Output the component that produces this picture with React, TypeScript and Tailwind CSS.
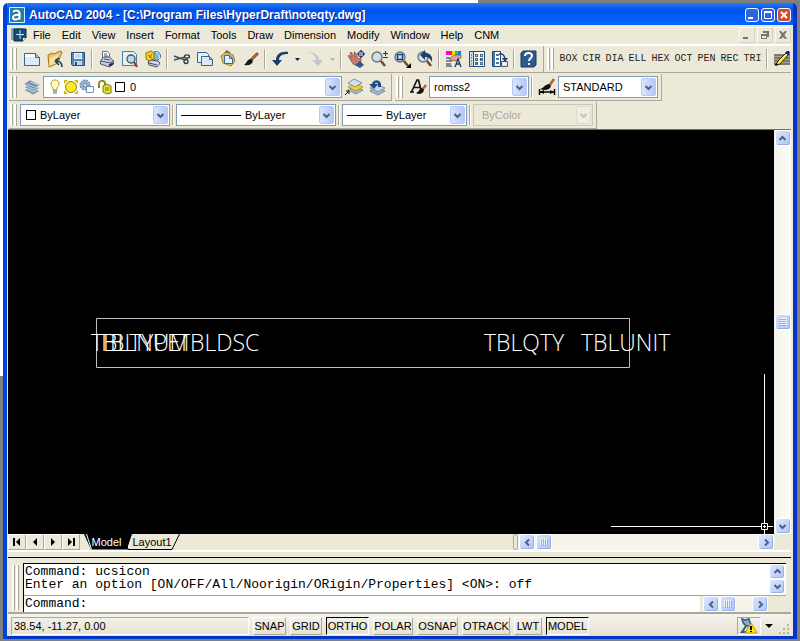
import React, { useState } from 'react';

const MENUS = ['File', 'Edit', 'View', 'Insert', 'Format', 'Tools', 'Draw', 'Dimension', 'Modify', 'Window', 'Help', 'CNM'];
const SHAPES = ['BOX', 'CIR', 'DIA', 'ELL', 'HEX', 'OCT', 'PEN', 'REC', 'TRI'];

/* ---------- Icons ---------- */

const Icon: React.FC<{ children: React.ReactNode }> = ({ children }) => (
    <svg viewBox="0 0 18 18" className="h-[18px] w-[18px] shrink-0" fill="none" aria-hidden="true">
        {children}
    </svg>
);

const NewIcon = () => (
    <Icon>
        <path d="M1.500 3.500h11l4 4v8h-15z" fill="#dcebf5" stroke="#35678f" />
        <path d="M2 4h10v3H2z" fill="#fff" />
        <path d="M12.500 3.500v4h4" fill="#a8c8dc" stroke="#35678f" />
    </Icon>
);

const OpenIcon = () => (
    <Icon>
        <path d="M2 5l4-2 2 1 6-3 2 1-4 11-9 4z" fill="#e9c46a" stroke="#a07a20" />
        <path d="M4 8l9-4-3 9-7 3z" fill="#f7df9a" />
        <path d="M16 17c0-4-2-6-6-6M9 11l4-3M9 11l4 4" stroke="#1d3f66" strokeWidth="1.600" />
    </Icon>
);

const SaveIcon = () => (
    <Icon>
        <path d="M2.500 2.500h13v13h-12l-1-1z" fill="#4d87b5" stroke="#24517c" />
        <path d="M5 3h8v6H5z" fill="#f2f6fa" />
        <path d="M6 5h6M6 7h6" stroke="#9ab3c6" />
        <path d="M5 11h8v4H5z" fill="#c4d9e8" />
        <path d="M6 12h2v3H6z" fill="#24517c" />
    </Icon>
);

const PrintIcon = () => (
    <Icon>
        <path d="M4.500 8V1.500h5l2 2v5" fill="#fff" stroke="#5a6c90" />
        <path d="M2.500 11l3-4h6l4 4v3l-4 3-9-3z" fill="#c9cfdd" stroke="#4a5575" />
        <path d="M3 11l9 2 3-2M6 9l6 1M6 4h3M6 6h4" stroke="#4a5575" />
        <path d="M11 15.500l4-2" stroke="#222c48" strokeWidth="2" />
    </Icon>
);

const PreviewIcon = () => (
    <Icon>
        <path d="M1.500 1.500h11l3 3v11h-14z" fill="#e6f1f7" stroke="#4b7ea4" />
        <circle cx="10" cy="9" r="4" fill="#b8dcee" stroke="#555" strokeWidth="1.400" />
        <path d="M13 12l3 5" stroke="#8b4a20" strokeWidth="2.400" />
    </Icon>
);

const PublishIcon = () => (
    <Icon>
        <circle cx="12" cy="6" r="4.500" fill="#7cb7dd" stroke="#326f9b" />
        <path d="M12 2c3 1 4 4 3 7" stroke="#fff" />
        <path d="M2 3l5-2 3 2v6l-5 2-3-2z" fill="#ffd21f" stroke="#967207" />
        <path d="M4 5l4 3M8 4L5 8" stroke="#a96000" />
        <path d="M4 12l3-2 7 1 2 2-3 4-8-2z" fill="#d2d7e2" stroke="#465274" />
        <path d="M5 13l8 2" stroke="#465274" />
    </Icon>
);

const CutIcon = () => (
    <Icon>
        <path d="M1 6l11 4M1 10l11-3" stroke="#475065" strokeWidth="1.400" />
        <ellipse cx="14" cy="6.500" rx="2.500" ry="1.700" stroke="#28344f" strokeWidth="1.300" />
        <ellipse cx="13" cy="11.500" rx="2" ry="2" stroke="#28344f" strokeWidth="1.300" />
    </Icon>
);

const CopyIcon = () => (
    <Icon>
        <path d="M1.500 2.500h9l2 2v8h-11z" fill="#e7f2f8" stroke="#35678f" />
        <path d="M5.500 6.500h8l3 3v6h-11z" fill="#d9eaf4" stroke="#35678f" />
        <path d="M13.500 6.500v3h3" stroke="#35678f" />
    </Icon>
);

const PasteIcon = () => (
    <Icon>
        <path d="M2 6l5-4 7 3 2 6-4 5-8-3z" fill="#e3bd6a" stroke="#a67c27" />
        <path d="M6 3l2-2 3 2" stroke="#666" strokeWidth="1.500" />
        <path d="M5.500 5.500h5l3 3v5h-8z" fill="#e7f2f8" stroke="#35678f" />
        <path d="M10.500 5.500v3h3" stroke="#35678f" />
    </Icon>
);

const BrushIcon = () => (
    <Icon>
        <path d="M15 4l-6 6" stroke="#8d4a2b" strokeWidth="3" strokeLinecap="round" />
        <path d="M15 4l-5 5" stroke="#c98a63" />
        <path d="M9 9c-4 0-4 4-7 6 4 1 8 0 9-4z" fill="#191919" />
    </Icon>
);

const UndoIcon: React.FC<{ faded?: boolean }> = ({ faded }) => (
    <Icon>
        {faded ? (
            <path d="M1 2c7 0 12 3 12 8h4l-5 6-6-6h4c0-4-3-7-9-8z" fill="#c4c4c8" />
        ) : (
            <path d="M17 2C10 1 5 4 5 10H1l5 6 5-6H8c0-4 3-6 9-6z" fill="#1c3f70" />
        )}
    </Icon>
);

const PanIcon = () => (
    <Icon>
        <path d="M1 6l1-1 3 3-2-5 1-1 4 5-1-5h1l3 6 1 1 1-1h1v4l-3 4-5-2z" fill="#c67a70" stroke="#8d4742" strokeWidth=".7" />
        <path d="M8 15l5-4 4 4-4 3z" fill="#31568b" />
        <path d="M14 1v6M11 4h6M14 0l-2 2h4zM14 8l-2-2h4zM10 4l2-2v4zM18 4l-2-2v4z" fill="#1c3f70" stroke="#1c3f70" strokeWidth=".5" />
    </Icon>
);

const Lens = () => (
    <>
        <circle cx="7" cy="7" r="5" fill="#cfe0e8" stroke="#68757c" strokeWidth="1.400" />
        <path d="M11 11l4 5" stroke="#7d4a28" strokeWidth="2.600" />
    </>
);

const ZoomIcon = () => (
    <Icon>
        <Lens />
        <path d="M15.500 1v5M13 3.500h5M13 7.500h5" stroke="#173a6a" />
    </Icon>
);

const ZoomWindowIcon = () => (
    <Icon>
        <Lens />
        <path d="M4.500 4.500h5v5h-5z" stroke="#123f83" strokeWidth="1.500" />
        <path d="M18 13v5h-5z" fill="#000" />
    </Icon>
);

const ZoomPreviousIcon = () => (
    <Icon>
        <Lens />
        <path d="M16 12c1-6-2-9-7-9V0L4 5l5 5V7c3 0 5 1 7 5z" fill="#1c3f70" />
    </Icon>
);

const PropertiesIcon = () => (
    <Icon>
        <path d="M1 1h3v4H1z" fill="#f0f" />
        <path d="M4 1h3v4H4z" fill="#f22" />
        <path d="M7 1h3v4H7z" fill="#fd0" />
        <path d="M10 1h3v4h-3z" fill="#2c3" />
        <path d="M13 1h3v4h-3z" fill="#08e" />
        <path d="M4 9l5-4 7 0v3l-6 3-4-1z" fill="#dca48f" stroke="#8d4742" strokeWidth=".7" />
        <path d="M1 8h4M1 11h6M1 14h5M1 16h6" stroke="#536b80" strokeWidth="1.300" />
        <path d="M10 17l3-8 3 8M11 14h4" stroke="#173a6a" strokeWidth="1.300" />
    </Icon>
);

const DesignCenterIcon = () => (
    <Icon>
        <path d="M1.500 1.500h15v15h-15z" fill="#f5f6ec" stroke="#1f4b7a" />
        <path d="M2 2h3v14H2z" fill="#cddfea" />
        <path d="M5.500 2v14M3 5h1M3 8h1M3 11h1M3 14h1" stroke="#1f4b7a" />
        <path d="M7 4h3v3H7zM12 4h3v3h-3zM7 8h3v3H7zM12 8h3v3h-3zM7 12h3v3H7zM12 12h3v3h-3z" fill="#496785" />
        <path d="M8 5h1v1H8zM13 5h1v1h-1zM8 9h1v1H8zM13 13h1v1h-1z" fill="#ffd84b" />
    </Icon>
);

const PalettesIcon = () => (
    <Icon>
        <path d="M1.500 1.500h8v15h-8z" fill="#fff" stroke="#1f4b7a" />
        <path d="M2 2h2v14H2z" fill="#4679a6" />
        <path d="M5 4h3v2H5zM5 8h3v2H5zM5 12h3v2H5z" fill="#4679a6" />
        <path d="M8 4c4-1 6 2 6 6" stroke="#1c3f70" strokeWidth="1.500" />
        <path d="M10.500 11.500h6v5h-6z" fill="#e4eef4" stroke="#555" />
        <path d="M11 8l3 4 3-4z" fill="#1c3f70" />
    </Icon>
);

const HelpIcon = () => (
    <Icon>
        <path d="M1 3l2-2h13v14l-2 2H1z" fill="#2c5c8c" stroke="#173a5e" />
        <path d="M5 6c0-4 7-4 7 0 0 2-3 2-3 5" stroke="#fff" strokeWidth="2" />
        <path d="M8 13h2v2H8z" fill="#fff" />
    </Icon>
);

const PencilIcon = () => (
    <Icon>
        <path d="M1 4h16v11H1z" fill="#a3a08f" />
        <path d="M1 5h16M1 8h16M1 11h16M1 14h16" stroke="#555" />
        <path d="M3 15l2-4 9-9 2 2-9 10z" fill="#ffee22" stroke="#222" />
        <path d="M12 3l2-2h2l1 2-2 2z" fill="#1010d0" />
        <path d="M2 16l1-3 2 2z" fill="#000" />
    </Icon>
);

const LayersIcon = () => (
    <Icon>
        <path d="M1 12l6-3 10 4-7 4z" fill="#8599ad" stroke="#f4f4f4" strokeWidth=".6" />
        <path d="M1 9l6-3 10 4-7 4z" fill="#8fa6bb" stroke="#f4f4f4" strokeWidth=".6" />
        <path d="M1 6l6-4 10 5-7 4z" fill="#6f8ca8" stroke="#e0e8ee" strokeWidth=".6" />
        <path d="M4 6l8 3M7 4l8 3" stroke="#c6d4df" />
    </Icon>
);

const MakeLayerIcon = () => (
    <Icon>
        <path d="M3 12l6-4 9 4-7 4z" fill="#a7bccd" stroke="#51708d" strokeWidth=".7" />
        <path d="M3 9l6-4 9 4-7 4z" fill="#f7d228" stroke="#a18112" strokeWidth=".7" />
        <path d="M3 5l6-4 8 4-7 4z" fill="#d4e1ea" stroke="#51708d" strokeWidth=".7" />
        <path d="M0 17l4-4M1 13h3v3" stroke="#000" />
    </Icon>
);

const LayerPreviousIcon = () => (
    <Icon>
        <path d="M2 13l6-4 9 4-7 4z" fill="#a7bccd" stroke="#51708d" strokeWidth=".7" />
        <path d="M2 10l6-4 9 4-7 4z" fill="#c7d6e1" stroke="#51708d" strokeWidth=".7" />
        <path d="M4 6c1-5 8-5 9 0v3h-3V6c-1-2-3-1-3 0h3L6 11 1 6z" fill="#1c4e85" />
    </Icon>
);

const TextStyleIcon = () => (
    <Icon>
        <path d="M1 14h4M2.500 14L8 2h1.500l3 12M4.500 9.500h7" stroke="#111" strokeWidth="1.700" />
        <path d="M17 7l-4 5" stroke="#a9643d" strokeWidth="2.400" />
        <path d="M13 10c-3 1-3 4-6 5 3 2 7 1 8-3z" fill="#111" />
    </Icon>
);

const DimStyleIcon = () => (
    <Icon>
        <path d="M16 1l-5 7" stroke="#a9643d" strokeWidth="2.600" />
        <path d="M11 6c-5 1-5 4-9 5 5 2 10 1 11-3z" fill="#111" />
        <path d="M1.500 11v6M16.500 11v6M2 14h14" stroke="#000" strokeWidth="1.500" />
        <path d="M2 14l4-2v4zM16 14l-4-2v4z" fill="#000" />
    </Icon>
);

const LayerStateIcons = () => (
    <svg viewBox="0 0 82 18" className="h-[18px] w-[82px] shrink-0" fill="none" aria-hidden="true">
        <path d="M7 2c-5 0-5 5-2 8v2h4v-2c3-3 3-8-2-8z" fill="#fffbc0" stroke="#b49b28" />
        <path d="M5 13h4M5 15h4" stroke="#5d6676" />
        <path d="M16 2h4l-4 4zM30 2h-4l4 4zM16 16v-4l4 4zM30 16v-4l-4 4z" fill="#ddb600" />
        <circle cx="23" cy="9" r="5.500" fill="#ffea20" stroke="#8f8420" />
        <circle cx="37" cy="7" r="5" fill="#9bb5d0" stroke="#5b7b9f" strokeDasharray="2 1" />
        <circle cx="37" cy="7" r="2" fill="#d7e2ec" stroke="#6685a8" />
        <path d="M38.500 8.500h7v6h-7z" fill="#fff" stroke="#7792b0" />
        <path d="M51 10V6c0-4 5-4 6-1v3" stroke="#8c8b15" strokeWidth="2" />
        <path d="M55 8l4-2 4 2v7l-4 1-4-2z" fill="#e8df30" stroke="#77751a" />
        <path d="M57 10h4M57 12h4" stroke="#77751a" />
        <path d="M67.500 4.500h9v9h-9z" fill="#fff" stroke="#000" />
    </svg>
);

/* ---------- Toolbar pieces ---------- */

const ToolButton: React.FC<{ label: string; children: React.ReactNode }> = ({ label, children }) => (
    <button aria-label={label} className="flex h-[23px] w-[23px] shrink-0 items-center justify-center">
        {children}
    </button>
);

const Separator = () => <div className="mx-[2px] h-5 w-[2px] shrink-0 border-l border-[#aca899] bg-white" />;

const Grip = () => (
    <div className="mr-[2px] ml-px flex shrink-0 gap-px self-stretch py-[2px]">
        <div className="w-[3px] border-r border-[#aca899] bg-white" />
        <div className="w-[3px] border-r border-[#aca899] bg-white" />
    </div>
);

const MiniArrow: React.FC<{ label: string; faded?: boolean }> = ({ label, faded }) => (
    <button aria-label={label} className="flex h-[23px] w-3 shrink-0 items-center justify-center">
        <svg viewBox="0 0 5 3" className="h-[3px] w-[5px]" aria-hidden="true">
            <path d="M0 0h5L2.500 3z" fill={faded ? '#b4b2aa' : '#0a1a5a'} />
        </svg>
    </button>
);

const Bar: React.FC<{ children: React.ReactNode }> = ({ children }) => (
    <div className="flex h-[27px] shrink-0 items-center border-r border-b border-[#aca899] pr-[3px]">
        <Grip />
        {children}
    </div>
);

const ARROWS = {
    up: 'M1.500 6l3-3 3 3',
    down: 'M1.500 3l3 3 3-3',
    left: 'M6 1.500l-3 3 3 3',
    right: 'M3 1.500l3 3-3 3',
};

const Arrow: React.FC<{ dir: keyof typeof ARROWS; color?: string }> = ({ dir, color = '#4d6185' }) => (
    <svg viewBox="0 0 9 9" className="h-[9px] w-[9px]" fill="none" aria-hidden="true">
        <path d={ARROWS[dir]} stroke={color} strokeWidth="2" />
    </svg>
);

interface ComboProps {
    label: string;
    value: string;
    width: string;
    disabled?: boolean;
    children?: React.ReactNode;
}

const Combo: React.FC<ComboProps> = ({ label, value, width, disabled, children }) => (
    <div
        className={`relative flex h-[22px] shrink-0 items-center border pl-1 ${width} ${
            disabled ? 'border-[#c9c7ba] bg-[#ece9d8]' : 'border-[#7f9db9] bg-white'
        }`}
    >
        {children}
        <select
            aria-label={label}
            disabled={disabled}
            defaultValue={value}
            className="h-full min-w-0 flex-1 appearance-none bg-transparent pr-5 text-black outline-none disabled:text-[#aca899] disabled:opacity-100"
        >
            <option>{value}</option>
        </select>
        <span
            className={`pointer-events-none absolute inset-y-px right-px flex w-[15px] items-center justify-center rounded-[2px] border ${
                disabled ? 'border-[#dddacb] bg-[#f0eee2]' : 'border-[#b6c8f5] bg-linear-to-r from-[#dbe6fe] to-[#b4c8f6]'
            }`}
        >
            <Arrow dir="down" color={disabled ? '#c4c2b6' : '#4d6185'} />
        </span>
    </div>
);

const ScrollButton: React.FC<{ dir: keyof typeof ARROWS; small?: boolean }> = ({ dir, small }) => (
    <button
        aria-label={`Scroll ${dir}`}
        className={`flex w-4 shrink-0 items-center justify-center rounded-[3px] border border-white bg-linear-to-br from-[#dbe6fe] to-[#b2c7f8] shadow-[inset_-1px_-1px_0_#98b1e4] ${
            small ? 'h-[15px]' : 'h-4'
        }`}
    >
        <Arrow dir={dir} />
    </button>
);

const Thumb: React.FC<{ vertical?: boolean }> = ({ vertical }) => (
    <div className="flex h-4 w-4 shrink-0 items-center justify-center rounded-[3px] border border-white bg-linear-to-br from-[#d3e0fe] to-[#b2c7f8] shadow-[inset_-1px_-1px_0_#98b1e4]">
        <svg viewBox="0 0 8 8" className={`h-2 w-2 ${vertical ? 'rotate-90' : ''}`} fill="none" aria-hidden="true">
            <path d="M.5 0v7M2.500 0v7M4.500 0v7M6.500 0v7" stroke="#eef4fe" />
            <path d="M1.500 1v7M3.500 1v7M5.500 1v7M7.500 1v7" stroke="#8cb0f8" />
        </svg>
    </div>
);

/* ---------- Window sections ---------- */

const TitleBar = () => (
    <header className="flex h-[22px] shrink-0 items-center bg-linear-to-b from-[#2a7af5] via-[#0054e8] via-30% to-[#0066ff] px-[2px] pt-[2px]">
        <svg viewBox="0 0 16 16" className="h-4 w-4 shrink-0" fill="none" aria-hidden="true">
            <path d="M.5.5h15v15H.5z" fill="#287f9c" stroke="#d9edf4" />
            <path d="M4 5c2-2 6-2 6.500 1v6.500M10 8C6 7.500 4 8.500 4 10.500c0 3 5 2.500 6.500 0" stroke="#fff" strokeWidth="2" />
        </svg>
        <h1 className="ml-1 flex-1 truncate text-[12px] font-bold text-white [text-shadow:1px_1px_#0a1883]">
            AutoCAD 2004 - [C:\Program Files\HyperDraft\noteqty.dwg]
        </h1>
        <div className="flex gap-[2px]">
            <button aria-label="Minimize" className="h-[14px] w-[14px] rounded-[3px] border border-white bg-[#2f63e0]">
                <svg viewBox="0 0 12 12" aria-hidden="true"><path d="M2 8h5v2H2z" fill="#fff" /></svg>
            </button>
            <button aria-label="Maximize" className="h-[14px] w-[14px] rounded-[3px] border border-white bg-[#2f63e0]">
                <svg viewBox="0 0 12 12" fill="none" aria-hidden="true"><path d="M2.500 3v6.500h7V3z" stroke="#fff" /><path d="M2 2h8v2H2z" fill="#fff" /></svg>
            </button>
            <button aria-label="Close" className="h-[14px] w-[14px] rounded-[3px] border border-white bg-[#d9492a]">
                <svg viewBox="0 0 12 12" aria-hidden="true"><path d="M3 3l6 6M9 3L3 9" stroke="#fff" strokeWidth="2" /></svg>
            </button>
        </div>
    </header>
);

const MenuBar = () => (
    <nav className="flex h-[21px] shrink-0 items-center border-b-2 border-white bg-[#ece9d8] pl-[3px]">
        <svg viewBox="0 0 16 14" className="h-[14px] w-4 shrink-0" fill="none" aria-hidden="true">
            <path d="M0 0h12v12H0z" fill="#7fa9c2" />
            <path d="M3 1h12v9l-3 3H3z" fill="#174d72" stroke="#0b2c45" />
            <path d="M9 2v9M5 6.500h8" stroke="#bfe7ff" />
            <path d="M12 13v-3h3z" fill="#fff" />
        </svg>
        <ul className="ml-[6px] flex flex-1 gap-[11px]">
            {MENUS.map(menu => (
                <li key={menu}>
                    <button>{menu}</button>
                </li>
            ))}
        </ul>
        <div className="flex gap-[2px]">
            {['M4 10h5v2H4z', 'M4 7h6v5H4zM6 4h6v6h-2V6H6z', 'M4 4h2l2 2 2-2h2L9.500 8l2.500 4h-2L8 10l-2 2H4l2.500-4z'].map((d, i) => (
                <button
                    key={d}
                    aria-label={['Minimize drawing', 'Restore drawing', 'Close drawing'][i]}
                    className="h-4 w-4 border border-[#f8f7f1] border-r-[#d8d5c6] border-b-[#d8d5c6]"
                >
                    <svg viewBox="1 1 14 14" aria-hidden="true">
                        <path d={d} fill="#77756c" />
                        {i === 1 && <path d="M5 9h4v2H5z" fill="#ece9d8" />}
                    </svg>
                </button>
            ))}
        </div>
    </nav>
);

const Toolbars = () => (
    <div className="flex shrink-0 flex-col gap-px overflow-hidden border-b border-[#716f64] bg-[#ece9d8] pl-px">
        <div className="flex">
            <Bar>
                <div className="w-px" />
                <ToolButton label="New"><NewIcon /></ToolButton>
                <ToolButton label="Open"><OpenIcon /></ToolButton>
                <ToolButton label="Save"><SaveIcon /></ToolButton>
                <Separator />
                <ToolButton label="Plot"><PrintIcon /></ToolButton>
                <ToolButton label="Plot preview"><PreviewIcon /></ToolButton>
                <ToolButton label="Publish"><PublishIcon /></ToolButton>
                <Separator />
                <ToolButton label="Cut"><CutIcon /></ToolButton>
                <ToolButton label="Copy"><CopyIcon /></ToolButton>
                <ToolButton label="Paste"><PasteIcon /></ToolButton>
                <ToolButton label="Match properties"><BrushIcon /></ToolButton>
                <Separator />
                <ToolButton label="Undo"><UndoIcon /></ToolButton>
                <MiniArrow label="Undo list" />
                <ToolButton label="Redo"><UndoIcon faded /></ToolButton>
                <MiniArrow label="Redo list" faded />
                <Separator />
                <ToolButton label="Pan"><PanIcon /></ToolButton>
                <ToolButton label="Zoom realtime"><ZoomIcon /></ToolButton>
                <ToolButton label="Zoom window"><ZoomWindowIcon /></ToolButton>
                <ToolButton label="Zoom previous"><ZoomPreviousIcon /></ToolButton>
                <Separator />
                <ToolButton label="Properties"><PropertiesIcon /></ToolButton>
                <ToolButton label="DesignCenter"><DesignCenterIcon /></ToolButton>
                <ToolButton label="Tool palettes"><PalettesIcon /></ToolButton>
                <Separator />
                <ToolButton label="Help"><HelpIcon /></ToolButton>
            </Bar>
            <div className="flex h-[27px] flex-1 items-center border-b border-[#aca899] pl-[2px]">
                <Grip />
                <div className="ml-px flex">
                    {SHAPES.map(shape => (
                        <button
                            key={shape}
                            className="w-[23px] shrink-0 font-['Liberation_Mono','DejaVu_Sans_Mono',monospace] text-[10px] text-[#222]"
                        >
                            {shape}
                        </button>
                    ))}
                </div>
                <Separator />
                <ToolButton label="Edit text"><PencilIcon /></ToolButton>
            </div>
        </div>

        <div className="flex">
            <Bar>
                <div className="w-px" />
                <ToolButton label="Layer manager"><LayersIcon /></ToolButton>
                <Combo label="Layer" value="0" width="w-[299px]">
                    <LayerStateIcons />
                </Combo>
                <ToolButton label="Make layer current"><MakeLayerIcon /></ToolButton>
                <ToolButton label="Layer previous"><LayerPreviousIcon /></ToolButton>
            </Bar>
            <div className="w-[3px]" />
            <Bar>
                <div className="w-px" />
                <ToolButton label="Text style"><TextStyleIcon /></ToolButton>
                <Combo label="Text style" value="romss2" width="w-[100px]" />
                <Separator />
                <ToolButton label="Dimension style"><DimStyleIcon /></ToolButton>
                <Combo label="Dimension style" value="STANDARD" width="w-[100px]" />
            </Bar>
        </div>

        <div className="flex">
            <Bar>
                <div className="w-px" />
                <Combo label="Color" value="ByLayer" width="w-[150px]">
                    <span className="mr-1 ml-px h-[10px] w-[10px] border border-black" />
                </Combo>
                <Separator />
                <Combo label="Linetype" value="ByLayer" width="w-[160px]">
                    <span className="mr-1 h-px w-[60px] bg-black" />
                </Combo>
                <Separator />
                <Combo label="Lineweight" value="ByLayer" width="w-[125px]">
                    <span className="mr-1 h-px w-[35px] bg-black" />
                </Combo>
                <Separator />
                <Combo label="Plot style" value="ByColor" width="w-[120px]" disabled>
                    <span className="w-1" />
                </Combo>
            </Bar>
        </div>
    </div>
);

const DrawingArea = () => (
    <main className="flex min-h-0 flex-1 bg-black">
        <svg className="h-full min-w-0 flex-1" fill="none" role="img" aria-label="Model space">
            <path d="M88.500 188.500h533v49h-533z" stroke="#c0c0c0" />
            <g fill="#fff" className="font-['Open_Sans','Noto_Sans',sans-serif] text-[23px] font-light">
                <text x="83" y="221">TBLTYPE</text>
                <text x="90" y="221">TBLNUM</text>
                <text x="170" y="221">TBLDSC</text>
                <text x="476" y="221">TBLQTY</text>
                <text x="573" y="221">TBLUNIT</text>
            </g>
            <path d="M756.500 244v149M756.500 400v4M603 396.500h150M760 396.500h5M753.500 393.500h6v6h-6zM756.500 395v3M755 396.500h3" stroke="#fff" />
        </svg>
        <div className="flex w-[17px] shrink-0 flex-col items-center bg-linear-to-r from-[#f3f1e8] to-[#fdfdf9]">
            <ScrollButton dir="up" />
            <div className="flex-[168]" />
            <Thumb vertical />
            <div className="flex-[188]" />
            <ScrollButton dir="down" />
        </div>
    </main>
);

const NAV = [
    { label: 'First tab', d: 'M1 1h2v8H1zM8 1v8L4 5z' },
    { label: 'Previous tab', d: 'M7 1v8L3 5z' },
    { label: 'Next tab', d: 'M3 1v8l4-4z' },
    { label: 'Last tab', d: 'M2 1v8l4-4zM7 1h2v8H7z' },
];

const LayoutTabs = () => (
    <div className="flex h-[18px] shrink-0 items-start border-b-2 border-white bg-[#ece9d8]">
        <div className="flex">
            {NAV.map(({ label, d }) => (
                <button
                    key={label}
                    aria-label={label}
                    className="flex h-4 w-[18px] items-center justify-center border-t border-r border-b border-l border-[#aca899] border-t-white border-l-white"
                >
                    <svg viewBox="0 0 10 10" className="h-[10px] w-[10px]" aria-hidden="true">
                        <path d={d} />
                    </svg>
                </button>
            ))}
        </div>
        <div className="relative ml-1 flex h-4">
            <svg viewBox="0 0 98 16" className="absolute inset-0 h-4 w-[98px]" fill="none" aria-hidden="true">
                <path d="M43 15.500h45L95.500 0" stroke="#000" />
                <path d="M0 0h49l-6 15.500H7z" fill="#000" />
                <path d="M2.500 0l5 15.500M48.500 0l-5 15.500" stroke="#fff" />
                <path d="M41 5l3 10.500" stroke="#000" />
            </svg>
            <button className="relative w-[45px] text-center text-white">Model</button>
            <button className="relative w-[46px] text-center">Layout1</button>
        </div>
        <div className="flex-1" />
        <div className="flex h-4 w-[261px] gap-px bg-[#f5f3ea]">
            <div className="w-[5px] rounded-[2px] border border-[#aca899] bg-[#ece9d8]" />
            <ScrollButton dir="left" />
            <Thumb />
            <div className="flex-1" />
            <ScrollButton dir="right" />
        </div>
        <div className="w-[17px]" />
    </div>
);

const CommandWindow = () => {
    const [command, setCommand] = useState('');

    return (
        <section className="shrink-0 bg-[#ece9d8] pt-[5px]">
            <div className="flex border-t border-black pt-[5px] pr-[5px] pl-[3px] text-[13px] font-['Liberation_Mono','Courier_New',monospace]">
                <Grip />
                <div className="ml-[2px] flex-1 border-t border-l border-black">
                    <div className="flex h-8 border-b border-[#aca899] bg-white">
                        <div className="flex-1 overflow-hidden pl-px leading-[13px] whitespace-pre">
                            <p className="pt-px">Command: ucsicon</p>
                            <p>Enter an option [ON/OFF/All/Noorigin/ORigin/Properties] &lt;ON&gt;: off</p>
                        </div>
                        <div className="flex w-[17px] flex-col">
                            <ScrollButton dir="up" small />
                            <ScrollButton dir="down" small />
                        </div>
                    </div>
                    <div className="flex h-4">
                        <label htmlFor="command" className="bg-white pl-px leading-4">Command:</label>
                        <input
                            id="command"
                            value={command}
                            onChange={e => setCommand(e.target.value)}
                            className="min-w-0 flex-1 bg-white px-1 outline-none"
                        />
                        <div className="ml-[3px] flex w-[65px] gap-px bg-[#f5f3ea]">
                            <ScrollButton dir="left" />
                            <Thumb />
                            <div className="flex-1" />
                            <ScrollButton dir="right" />
                        </div>
                        <div className="w-[18px]" />
                    </div>
                </div>
            </div>
        </section>
    );
};

const MODES = [
    { name: 'SNAP', width: 'w-[33px]', on: false },
    { name: 'GRID', width: 'w-[32px]', on: false },
    { name: 'ORTHO', width: 'w-[43px]', on: true },
    { name: 'POLAR', width: 'w-[40px]', on: false },
    { name: 'OSNAP', width: 'w-[41px]', on: false },
    { name: 'OTRACK', width: 'w-[48px]', on: false },
    { name: 'LWT', width: 'w-[28px]', on: false },
    { name: 'MODEL', width: 'w-[43px]', on: true },
];

const StatusBar = () => (
    <footer className="flex h-6 shrink-0 items-center gap-1 border-t-2 border-[#aca899] bg-linear-to-b from-[#f5f4ee] to-[#e5e1cf] pt-[2px] pl-[3px]">
        <div className="h-[18px] w-[238px] border border-[#aca899] border-r-white border-b-white pl-[2px] leading-4">
            38.54, -11.27, 0.00
        </div>
        {MODES.map(({ name, width, on }) => (
            <button
                key={name}
                aria-pressed={on}
                className={`h-[18px] shrink-0 border text-center leading-4 ${width} ${
                    on ? 'border-black border-r-white border-b-white' : 'border-white border-r-[#aca899] border-b-[#aca899]'
                }`}
            >
                {name}
            </button>
        ))}
        <div className="flex-1" />
        <button aria-label="Communication center" className="h-[18px] w-6 border border-[#aca899] border-r-white border-b-white">
            <svg viewBox="0 0 22 16" fill="none" aria-hidden="true">
                <path d="M4 1c1 5 4 8 9 7l-2-7-4 1z" fill="#8fabc7" stroke="#315a83" strokeWidth="1.500" />
                <path d="M8 8l-4 6h7" stroke="#315a83" strokeWidth="2" />
                <path d="M13 5l6 10H7z" fill="#ffe81a" stroke="#b89400" />
                <path d="M12 8h2v4h-2zM12 13h2v1h-2z" fill="#000" />
            </svg>
        </button>
        <button aria-label="Tray settings" className="flex h-[18px] w-2 items-center justify-center">
            <svg viewBox="0 0 8 4" className="h-1 w-2" aria-hidden="true"><path d="M0 0h8L4 4z" /></svg>
        </button>
        <svg viewBox="0 0 14 14" className="h-[14px] w-[14px] self-end" aria-hidden="true">
            <path d="M10 2h2v2h-2zM6 6h2v2H6zM10 6h2v2h-2zM2 10h2v2H2zM6 10h2v2H6zM10 10h2v2h-2z" fill="#b8b4a2" />
        </svg>
    </footer>
);

export default function App() {
    return (
        <div className="relative flex h-screen flex-col bg-[#808080] px-[3px] pt-[3px] pb-[2px] font-['Liberation_Sans',Arial,sans-serif] text-[11px] leading-[14px] text-black">
            {/* Window behind, showing at the top left */}
            <div className="absolute top-0 left-0 h-[376px] w-[478px] bg-white" />
            <div className="relative flex min-h-0 flex-1 flex-col overflow-hidden rounded-t-[5px] border-r-4 border-b-3 border-l-4 border-[#0042dc] border-r-[#0831c8] border-b-[#0036c8]">
                <TitleBar />
                <div className="flex min-h-0 flex-1 flex-col border-r-2 border-l border-[#ece9d8]">
                    <MenuBar />
                    <Toolbars />
                    <DrawingArea />
                    <LayoutTabs />
                    <CommandWindow />
                    <StatusBar />
                </div>
            </div>
        </div>
    );
}
